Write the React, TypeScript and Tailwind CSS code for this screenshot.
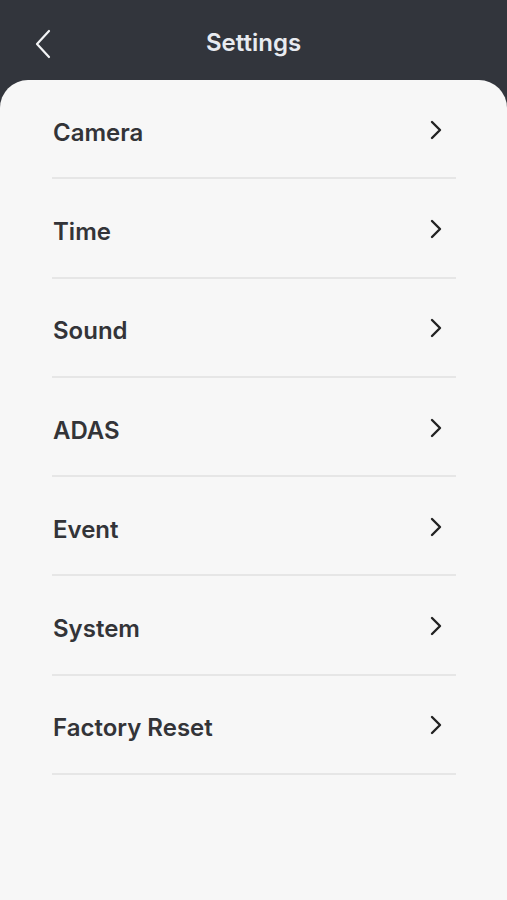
import React from "react";

const items = ["Camera", "Time", "Sound", "ADAS", "Event", "System", "Factory Reset"];

const ChevronRight = () => (
  <svg width="14" height="20" viewBox="0 0 14 20" fill="none">
    <path d="M3 2 L11 10 L3 18" stroke="#222" strokeWidth="2.4" strokeLinecap="round" strokeLinejoin="round" />
  </svg>
);

const App = () => {
  return (
    <div className="min-h-[900px] bg-[#32353c] flex flex-col" style={{ fontFamily: "Inter, 'Liberation Sans', sans-serif" }}>
      <header className="h-[80px] flex items-center relative shrink-0">
        <button className="absolute left-[33px] top-[28px]">
          <svg width="20" height="32" viewBox="0 0 20 32" fill="none">
            <path d="M16 3 L4 16 L16 29" stroke="#f3f4f6" strokeWidth="2.2" strokeLinecap="round" strokeLinejoin="round" />
          </svg>
        </button>
        <h1 className="w-full text-center text-[24px] font-semibold text-[#e8ebf0] mt-[6px]">Settings</h1>
      </header>

      <main className="flex-1 bg-[#f7f7f7] rounded-t-[28px]">
        <ul className="px-[52px] pr-[51px]">
          {items.map((item) => (
            <li key={item}>
              <div className="flex items-center justify-between h-[97.3px] pt-[8px]">
                <span className="text-[24px] font-semibold text-[#333438] ml-px">{item}</span>
                <span className="mr-[13px] -mt-[6px]">
                  <ChevronRight />
                </span>
              </div>
              <div className="h-[2px] bg-[#e6e6e6]" />
            </li>
          ))}
        </ul>
      </main>
    </div>
  );
};

export default App;
